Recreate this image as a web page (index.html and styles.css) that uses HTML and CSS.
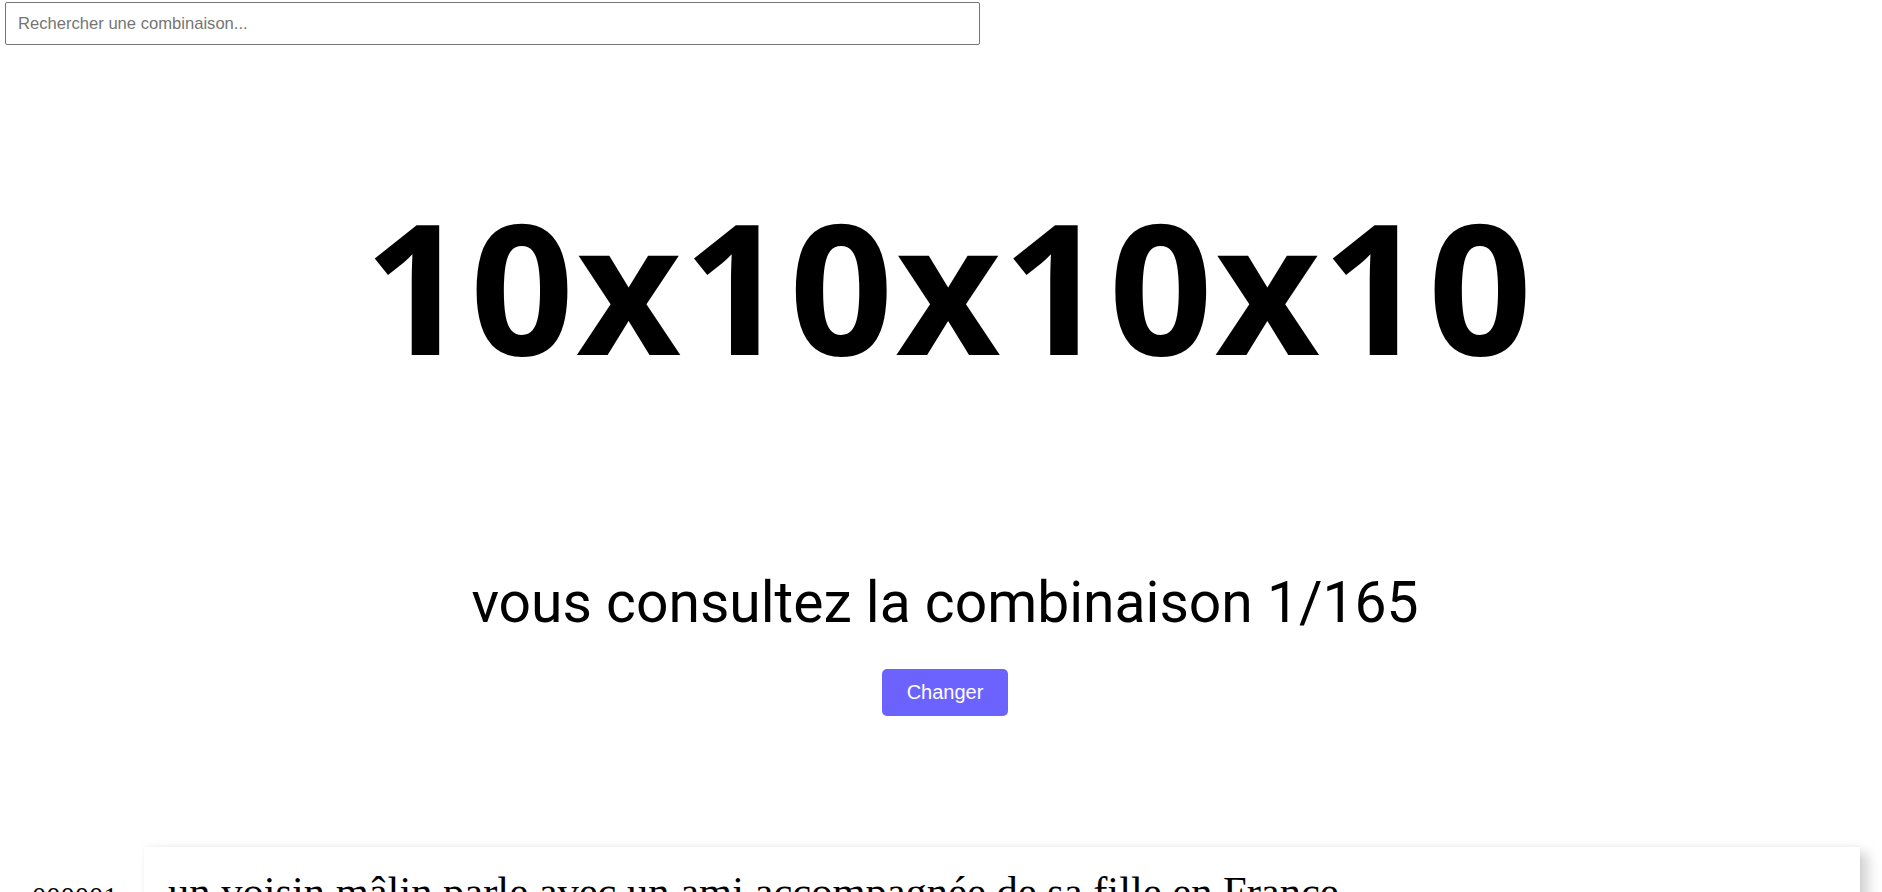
FILE: index.html
```html
<!DOCTYPE html>
<html lang="fr">
<head>
<meta charset="utf-8">
<title>Combinaisons</title>
<link rel="stylesheet" href="styles.css">
</head>
<body>
<input class="search" type="text" placeholder="Rechercher une combinaison...">
<main class="hero">
  <h1 class="combo">10x10x10x10</h1>
  <p class="counter">vous consultez la combinaison 1/165</p>
  <button class="change-btn" type="button">Changer</button>
</main>
<section class="entries">
  <div class="entry">
    <div class="entry-label">000001</div>
    <div class="entry-card">un voisin mâlin parle avec un ami accompagnée de sa fille en France</div>
  </div>
</section>
</body>
</html>
```
FILE: styles.css
```css
html, body {
  margin: 0;
  padding: 0;
  background: #ffffff;
}

body {
  font-family: Roboto, "Liberation Sans", Arial, sans-serif;
  color: #000;
}

.search {
  display: block;
  box-sizing: border-box;
  margin: 2px 0 0 5px;
  width: 975px;
  height: 43px;
  padding: 0 12px;
  border: 1px solid #767676;
  border-radius: 2px;
  font-family: "Liberation Sans", Arial, sans-serif;
  font-size: 16.6px;
  color: #000;
  outline: none;
}

.search::placeholder {
  color: #757575;
}

.hero {
  display: flex;
  flex-direction: column;
  align-items: center;
  padding-left: 8px;
}

.combo {
  margin: 148px 0 0;
  padding-left: 8px;
  font-family: "Open Sans", sans-serif;
  font-weight: 700;
  font-size: 182px;
  line-height: 1;
  letter-spacing: 2px;
}

.counter {
  margin: 199px 0 0;
  font-family: Roboto, sans-serif;
  font-weight: 400;
  font-size: 57px;
  line-height: 1;
}

.change-btn {
  margin-top: 38px;
  padding: 12px 25px;
  border: none;
  border-radius: 5px;
  background: #6c63ff;
  color: #fff;
  font-family: "Liberation Sans", Arial, sans-serif;
  font-size: 20px;
  line-height: 23px;
  cursor: pointer;
}

.entries {
  margin-top: 131px;
}

.entry {
  display: flex;
  align-items: flex-start;
  margin-right: 22px;
}

.entry-label {
  flex: 0 0 144px;
  box-sizing: border-box;
  padding: 37px 0 0 32px;
  font-family: "Liberation Serif", "Times New Roman", serif;
  font-size: 28.5px;
  line-height: 1;
}

.entry-card {
  flex: 1;
  padding: 20px 24px 24px;
  background: #fff;
  font-family: "Liberation Serif", "Times New Roman", serif;
  font-size: 42.5px;
  box-shadow: 0 -1px 4px rgba(0, 0, 0, 0.04), 8px 6px 12px rgba(0, 0, 0, 0.18);
}
```
